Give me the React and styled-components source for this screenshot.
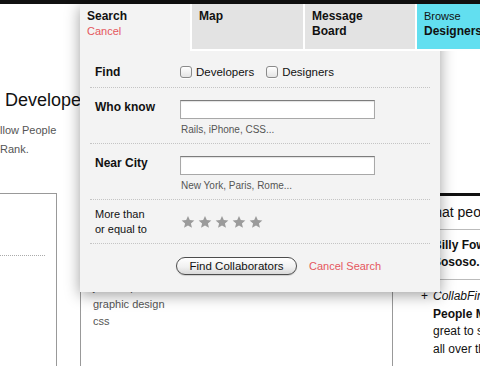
import React from "react";
import styled, { createGlobalStyle } from "styled-components";

const GlobalStyle = createGlobalStyle`
  html, body { margin: 0; padding: 0; background: #fff; }
  body { font-family: "Liberation Sans", Arial, Helvetica, sans-serif; color: #111; overflow: hidden; }
  * { box-sizing: border-box; }
`;

const Page = styled.div`
  position: relative;
  width: 480px;
  height: 366px;
  overflow: hidden;
  background: #fff;
`;

const TopBar = styled.div`
  height: 4px;
  background: #111;
`;

const Nav = styled.nav`
  position: relative;
  z-index: 3;
  display: flex;
  height: 47px;
  margin-left: 80px;
`;

const Tab = styled.div`
  flex: none;
  width: ${(p) => p.$w}px;
  padding: 5px 7px 0;
  font-size: 12px;
  line-height: 15px;
  background: ${(p) => (p.$active ? "transparent" : p.$accent ? "#62dff0" : "#e3e3e3")};
  border-left: ${(p) => (p.$active ? "none" : "2px solid #fff")};
  border-bottom: ${(p) => (p.$active ? "none" : "2px solid #fff")};
`;

const TabTitle = styled.span`
  display: block;
  font-weight: bold;
  font-size: 12px;
`;

const TabNote = styled.span`
  display: block;
  font-size: 11px;
  color: ${(p) => p.$color || "#111"};
`;

const Dropdown = styled.div`
  position: absolute;
  z-index: 2;
  top: 4px;
  left: 80px;
  width: 360px;
  height: 288px;
  padding: 47px 10px 0;
  background: #f3f3f3;
  box-shadow: 0 3px 14px rgba(0, 0, 0, 0.38);
`;

const Row = styled.div`
  display: grid;
  grid-template-columns: 85px 1fr;
  align-items: ${(p) => (p.$center ? "center" : "start")};
  padding: ${(p) => p.$pad};
  border-bottom: 1px dotted #c4c4c4;
`;

const Label = styled.div`
  font-size: 12px;
  line-height: 14px;
  font-weight: ${(p) => (p.$plain ? "normal" : "bold")};
  ${(p) => p.$plain && "font-size: 11px; line-height: 15px;"}
`;

const CheckGroup = styled.div`
  display: flex;
  align-items: center;
  gap: 12px;
`;

const CheckLabel = styled.label`
  display: flex;
  align-items: center;
  gap: 4px;
  font-size: 11.5px;
  line-height: 14px;
`;

const Check = styled.input.attrs({ type: "checkbox" })`
  appearance: none;
  margin: 0;
  width: 12px;
  height: 12px;
  border: 1px solid #8a8a8a;
  border-radius: 3px;
  background: linear-gradient(#ffffff, #e4e4e4);
  box-shadow: 0 1px 0 rgba(255, 255, 255, 0.8);
`;

const Field = styled.div`
  display: flex;
  flex-direction: column;
`;

const TextInput = styled.input.attrs({ type: "text" })`
  width: 195px;
  height: 19px;
  margin: 0;
  padding: 1px 3px;
  border: 1px solid #a8a8a8;
  border-top-color: #7c7c7c;
  background: #fff;
  box-shadow: inset 0 1px 1px rgba(0, 0, 0, 0.12);
  font: 11px "Liberation Sans", Arial, sans-serif;
`;

const Hint = styled.div`
  margin-top: 5px;
  padding-left: 1px;
  font-size: 10px;
  line-height: 12px;
  color: #555;
`;

const Stars = styled.div`
  display: flex;
  gap: 3px;
  padding-left: 1px;
`;

const Star = () => (
  <svg width="14" height="14" viewBox="0 0 24 24">
    <path d="M12 1.5l3.1 7.2 7.8.6-5.9 5.1 1.8 7.6L12 18l-6.8 4 1.8-7.6-5.9-5.1 7.8-.6z" fill="#9b9b9b" />
  </svg>
);

const Actions = styled.div`
  display: flex;
  align-items: center;
  gap: 12px;
  padding: 13px 0 0 86px;
`;

const PillButton = styled.button`
  width: 121px;
  height: 18px;
  padding: 0;
  border: 1px solid #4d4d4d;
  border-radius: 9px;
  background: linear-gradient(#ffffff, #f1f1f1 55%, #dadada);
  box-shadow: 0 1px 1px rgba(0, 0, 0, 0.15);
  font: 11.5px "Liberation Sans", Arial, sans-serif;
  line-height: 16px;
  color: #111;
`;

const TextLink = styled.a`
  font-size: 11px;
  color: #e5575d;
  text-decoration: none;
`;

const Hero = styled.section`
  padding-top: 38px;
`;

const Heading = styled.h1`
  margin: 0 0 0 5px;
  font-size: 18px;
  font-weight: normal;
  line-height: 22px;
  color: #111;
`;

const Intro = styled.p`
  margin: 10px 0 0;
  font-size: 11px;
  line-height: 19px;
  color: #555;
`;

const Columns = styled.div`
  display: flex;
  margin-top: 34px;
  height: 200px;
`;

const LeftBox = styled.div`
  flex: none;
  width: 57px;
  padding-right: 11px;
  border-top: 1px solid #999;
  border-right: 1px solid #999;
`;

const Divider = styled.div`
  height: 62px;
  border-bottom: 1px dotted #aaa;
`;

const MiddleBox = styled.div`
  flex: none;
  width: 312px;
  margin-left: 23px;
  padding: 8px 12px 0;
  border-top: 1px solid #999;
  border-left: 1px solid #999;
`;

const BoxTitle = styled.h3`
  margin: 0 0 9px;
  font-size: 12px;
  line-height: 17px;
`;

const TagList = styled.ul`
  margin: 0;
  padding: 0;
  list-style: none;
  font-size: 11px;
  line-height: 17px;
  color: #555;
`;

const RightCol = styled.div`
  flex: none;
  width: 240px;
  border-left: 1px solid #999;
  border-top: 3px solid #111;
`;

const ColTitle = styled.h2`
  margin: 0;
  padding: 7px 0 8px 28px;
  font-size: 14px;
  font-weight: normal;
  line-height: 18px;
  border-bottom: 1px solid #bbb;
  white-space: nowrap;
`;

const Item = styled.div`
  display: grid;
  grid-template-columns: 12px 1fr;
  padding: ${(p) => p.$pad};
  font-size: 12px;
  line-height: ${(p) => p.$lh};
  white-space: nowrap;
  border-bottom: ${(p) => (p.$last ? "none" : "1px solid #bbb")};
`;

export default function App() {
  return (
    <Page>
      <GlobalStyle />
      <TopBar />
      <Nav>
        <Tab $w={110} $active>
          <TabTitle>Search</TabTitle>
          <TabNote $color="#e5575d">Cancel</TabNote>
        </Tab>
        <Tab $w={113}>
          <TabTitle>Map</TabTitle>
        </Tab>
        <Tab $w={112}>
          <TabTitle>Message</TabTitle>
          <TabTitle>Board</TabTitle>
        </Tab>
        <Tab $w={120} $accent>
          <TabNote>Browse</TabNote>
          <TabTitle>Designers</TabTitle>
        </Tab>
      </Nav>

      <Dropdown>
        <Row $center $pad="14px 0 8px 5px">
          <Label>Find</Label>
          <CheckGroup>
            <CheckLabel>
              <Check />
              Developers
            </CheckLabel>
            <CheckLabel>
              <Check />
              Designers
            </CheckLabel>
          </CheckGroup>
        </Row>
        <Row $pad="12px 0 7px 5px">
          <Label>Who know</Label>
          <Field>
            <TextInput />
            <Hint>Rails, iPhone, CSS...</Hint>
          </Field>
        </Row>
        <Row $pad="12px 0 7px 5px">
          <Label>Near City</Label>
          <Field>
            <TextInput />
            <Hint>New York, Paris, Rome...</Hint>
          </Field>
        </Row>
        <Row $center $pad="7px 0 6px 5px">
          <Label $plain>
            More than
            <br />
            or equal to
          </Label>
          <Stars>
            <Star />
            <Star />
            <Star />
            <Star />
            <Star />
          </Stars>
        </Row>
        <Actions>
          <PillButton>Find Collaborators</PillButton>
          <TextLink href="#">Cancel Search</TextLink>
        </Actions>
      </Dropdown>

      <Hero>
        <Heading>Developers</Heading>
        <Intro>
          llow People
          <br />
          Rank.
        </Intro>
      </Hero>

      <Columns>
        <LeftBox>
          <Divider />
        </LeftBox>
        <MiddleBox>
          <BoxTitle>Skills</BoxTitle>
          <TagList>
            <li>ruby on rails</li>
            <li>iphone</li>
            <li>html</li>
            <li>javascript</li>
            <li>graphic design</li>
            <li>css</li>
          </TagList>
        </MiddleBox>
        <RightCol>
          <ColTitle>What people are saying</ColTitle>
          <Item $pad="7px 0 8px 28px" $lh="17px">
            <span>+</span>
            <b>
              Billy Fowler
              <br />
              Sososo.
            </b>
          </Item>
          <Item $pad="8px 0 0 28px" $lh="17.7px" $last>
            <span>+</span>
            <span>
              <i>CollabFinder</i>
              <br />
              <b>People Matching</b>
              <br />
              great to see
              <br />
              all over the
            </span>
          </Item>
        </RightCol>
      </Columns>
    </Page>
  );
}
